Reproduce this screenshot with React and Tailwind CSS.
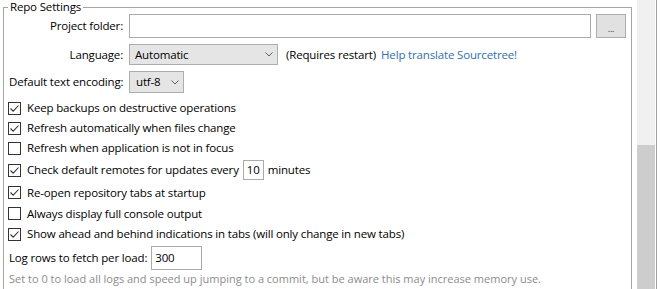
import { useState } from 'react'

function Chevron() {
  return (
    <svg width="8" height="5" viewBox="0 0 8 5" className="shrink-0">
      <path d="M0.5 0.5 L4 4 L7.5 0.5" fill="none" stroke="#606060" strokeWidth="1" />
    </svg>
  )
}

function Checkbox({ checked }) {
  return (
    <span className="w-[13px] h-[13px] border border-[#333333] bg-white flex items-center justify-center shrink-0">
      {checked && (
        <svg width="11" height="11" viewBox="0 0 11 11">
          <path d="M1.5 5.5 L4.2 8.2 L9.5 2.5" fill="none" stroke="#333333" strokeWidth="1.1" />
        </svg>
      )}
    </span>
  )
}

function CheckRow({ checked, className = 'h-[20px]', children }) {
  return (
    <div className={`flex items-center gap-[6px] ${className}`}>
      <Checkbox checked={checked} />
      <span className="flex items-center whitespace-nowrap">{children}</span>
    </div>
  )
}

export default function App() {
  const [folder] = useState('')

  return (
    <div className="w-[660px] h-[289px] overflow-hidden bg-white flex font-['Open_Sans',sans-serif] text-[11.5px] tracking-[-0.16px] text-black leading-[14px]">
      {/* Repo settings group */}
      <fieldset className="ml-[3px] w-[629px] h-[320px] shrink-0 border border-[#a5a5a5] pl-[4px] pr-[5px]">
        <legend className="px-[2px] leading-[14px]">Repo Settings</legend>

        <div className="flex items-center h-[24px]">
          <span className="w-[121px] text-right pr-[6px]">Project folder:</span>
          <div className="w-[462px] h-[24px] border border-[#ababab] bg-white">{folder}</div>
          <button className="ml-[5px] w-[30px] h-[24px] bg-[#e1e1e1] border border-[#adadad] text-[9px] leading-none pt-[4px] text-[#333]">
            ...
          </button>
        </div>

        <div className="flex items-center h-[21px] mt-[6px]">
          <span className="w-[121px] text-right pr-[6px]">Language:</span>
          <div className="w-[149px] h-[21px] bg-[#e5e5e5] border border-[#adadad] flex items-center justify-between pl-[5px] pr-[4px]">
            <span>Automatic</span>
            <Chevron />
          </div>
          <span className="ml-[8px]">(Requires restart)</span>
          <span className="ml-[5px] text-[#2f6fb0]">Help translate Sourcetree!</span>
        </div>

        <div className="flex items-center h-[22px] mt-[6px]">
          <span className="w-[121px] pl-[1px] whitespace-nowrap">Default text encoding:</span>
          <div className="w-[55px] h-[22px] bg-[#e5e5e5] border border-[#adadad] flex items-center justify-between pl-[6px] pr-[4px]">
            <span>utf-8</span>
            <Chevron />
          </div>
        </div>

        <div className="mt-[5px] flex flex-col">
          <CheckRow checked>Keep backups on destructive operations</CheckRow>
          <CheckRow checked>Refresh automatically when files change</CheckRow>
          <CheckRow checked={false}>Refresh when application is not in focus</CheckRow>
          <CheckRow checked className="h-[24px]">
            Check default remotes for updates every
            <span className="mx-[4px] w-[21px] h-[20px] border border-[#ababab] flex items-center justify-center">10</span>
            minutes
          </CheckRow>
          <CheckRow checked className="h-[21px]">Re-open repository tabs at startup</CheckRow>
          <CheckRow checked={false} className="h-[21px]">Always display full console output</CheckRow>
          <CheckRow checked className="h-[20px]">
            Show ahead and behind indications in tabs (will only change in new tabs)
          </CheckRow>
        </div>

        <div className="flex items-center h-[24px] mt-[2px] pl-[1px]">
          <span>Log rows to fetch per load:</span>
          <div className="ml-[4px] w-[51px] h-[24px] border border-[#ababab] flex items-center pl-[3px]">300</div>
        </div>
        <p className="pl-[1px] mt-[2px] text-[11px] tracking-[0px] text-[#8c8c8c] whitespace-nowrap">
          Set to 0 to load all logs and speed up jumping to a commit, but be aware this may increase memory use.
        </p>
      </fieldset>

      {/* Vertical scrollbar */}
      <div className="ml-[5px] w-[18px] h-full flex flex-col bg-[#f0f0f0]">
        <div className="h-[145px]" />
        <div className="flex-1 bg-[#cdcdcd]" />
      </div>
      <div className="ml-[1px] w-[1px] h-full bg-[#a0a0a0]" />
    </div>
  )
}
